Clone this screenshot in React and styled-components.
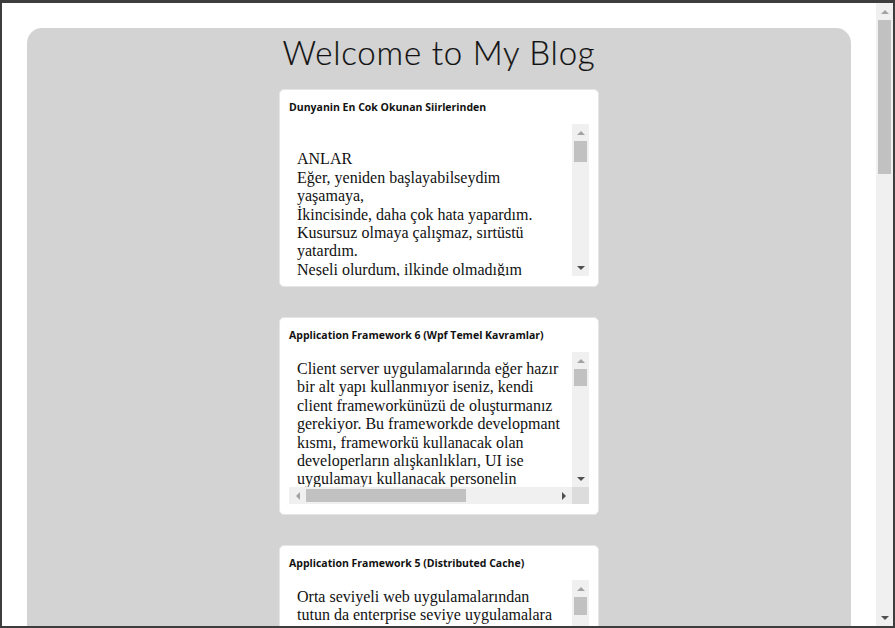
import React from 'react';
import styled, { createGlobalStyle, css } from 'styled-components';

const GlobalStyle = createGlobalStyle`
    html, body {
        margin: 0;
        height: 100%;
        overflow: hidden;
        background: #ffffff;
    }
`;

// browser window frame; the page and its scrollbar sit inside it
const WindowFrame = styled.div`
    height: 100vh;
    box-sizing: border-box;
    border: 2px solid #3d3d3d;
    border-top-width: 3px;
    display: flex;
    background: #ffffff;
`;

const Viewport = styled.div`
    flex: 1;
    min-width: 0;
    overflow: hidden;
`;

const Page = styled.div`
    padding: 25px;
`;

const BlogWrapper = styled.div`
    background: #d3d3d3;
    border-radius: 15px;
    padding: 4px 0 40px;
    display: flex;
    flex-direction: column;
    align-items: center;
`;

const BlogTitle = styled.h1`
    margin: 0 0 17px;
    font-family: Lato, "Open Sans", sans-serif;
    font-size: 33px;
    font-weight: 300;
    letter-spacing: 0.8px;
    line-height: 40px;
    color: #111111;
    -webkit-text-stroke: 0.2px #111111;
`;

const PostList = styled.div`
    display: flex;
    flex-direction: column;
    gap: 30px;
`;

const PostCard = styled.div`
    width: 320px;
    box-sizing: border-box;
    background: #ffffff;
    border: 1px solid #e6e6e6;
    border-radius: 5px;
    padding: 9px 9px 10px;
`;

const PostTitle = styled.h3`
    margin: 0 0 9px;
    font-family: "Open Sans", Lato, sans-serif;
    font-size: 10.5px;
    font-weight: 700;
    line-height: 16px;
    color: #111111;
`;

const PostBody = styled.div`
    height: 152px;
    display: grid;
    grid-template-columns: 1fr 17px;
    grid-template-rows: ${(p) => (p.$wide ? '1fr 17px' : '1fr')};
`;

const PostText = styled.div`
    min-width: 0;
    overflow: hidden;
    padding: 8px;
    font-family: "Liberation Serif", "Times New Roman", serif;
    font-size: 16px;
    line-height: 18.4px;
    color: #111111;
`;

const CodeLine = styled.pre`
    margin: 8px 0 0;
    font-family: "Liberation Mono", monospace;
    font-size: 13px;
    line-height: 16px;
`;

// fake classic scrollbar, drawn as elements
const Track = styled.div`
    background: #f0f0f0;
    display: flex;
    flex-direction: ${(p) => (p.$horizontal ? 'row' : 'column')};
    ${(p) => (p.$horizontal ? css`height: 17px;` : css`width: 17px;`)}
`;

const ArrowButton = styled.div`
    flex: 0 0 17px;
    width: 17px;
    height: 17px;
    display: flex;
    align-items: center;
    justify-content: center;
    &::after {
        content: '';
        width: 0;
        height: 0;
        ${(p) => {
            const c = p.$disabled ? '#a3a3a3' : '#505050';
            switch (p.$dir) {
                case 'up':
                    return css`border-left: 4px solid transparent; border-right: 4px solid transparent; border-bottom: 4px solid ${c};`;
                case 'down':
                    return css`border-left: 4px solid transparent; border-right: 4px solid transparent; border-top: 4px solid ${c};`;
                case 'left':
                    return css`border-top: 4px solid transparent; border-bottom: 4px solid transparent; border-right: 4px solid ${c};`;
                default:
                    return css`border-top: 4px solid transparent; border-bottom: 4px solid transparent; border-left: 4px solid ${c};`;
            }
        }}
    }
`;

const ThumbArea = styled.div`
    flex: 1;
    min-width: 0;
    min-height: 0;
    display: flex;
    flex-direction: ${(p) => (p.$horizontal ? 'row' : 'column')};
`;

const Thumb = styled.div`
    background: #c1c1c1;
    ${(p) => (p.$horizontal
        ? css`margin: 2px 0 2px ${p.$start}px; width: ${p.$size}px;`
        : css`margin: ${p.$start}px 2px 0; height: ${p.$size}px;`)}
`;

const Corner = styled.div`
    background: #dcdcdc;
`;

const ScrollBar = ({ horizontal, start = 0, size }) => (
    <Track $horizontal={horizontal}>
        <ArrowButton $dir={horizontal ? 'left' : 'up'} $disabled />
        <ThumbArea $horizontal={horizontal}>
            <Thumb $horizontal={horizontal} $start={start} $size={size} />
        </ThumbArea>
        <ArrowButton $dir={horizontal ? 'right' : 'down'} />
    </Track>
);

const posts = [
    {
        title: 'Dunyanin En Cok Okunan Siirlerinden',
        thumb: 21,
        lines: [
            '',
            'ANLAR',
            'Eğer, yeniden başlayabilseydim yaşamaya,',
            'İkincisinde, daha çok hata yapardım.',
            'Kusursuz olmaya çalışmaz, sırtüstü yatardım.',
            'Neşeli olurdum, ilkinde olmadığım kadar,',
            'Pek az şeyi ciddiye alırdım.',
            'Hijyenik olmazdım hiç.',
            'Daha çok riske girerdim.',
        ],
    },
    {
        title: 'Application Framework 6 (Wpf Temel Kavramlar)',
        thumb: 17,
        text: 'Client server uygulamalarında eğer hazır bir alt yapı kullanmıyor iseniz, kendi client frameworkünüzü de oluşturmanız gerekiyor. Bu frameworkde developmant kısmı, frameworkü kullanacak olan developerların alışkanlıkları, UI ise uygulamayı kullanacak personelin alışkanlıkları göz önüne alınarak tasarlanmalı.',
        code: '<Window x:Class="AppFramework.Shell" Title="Shell" Height="350">',
    },
    {
        title: 'Application Framework 5 (Distributed Cache)',
        thumb: 18,
        text: 'Orta seviyeli web uygulamalarından tutun da enterprise seviye uygulamalara kadar cache mekanizması performans için vazgeçilmez bir yapıdır. Uygulama birden fazla sunucu üzerinde çalıştığında ise cache verisinin sunucular arasında tutarlı olması gerekir.',
    },
    {
        title: 'Application Framework 4 (Logging)',
        thumb: 24,
        text: 'Her uygulamanın ihtiyaç duyduğu temel yapılardan biri de loglama altyapısıdır. Hataların, performans ölçümlerinin ve kullanıcı hareketlerinin kayıt altına alınması, uygulamanın bakımını oldukça kolaylaştırır.',
    },
    {
        title: 'Application Framework 3 (Exception Handling)',
        thumb: 22,
        text: 'Uygulamada oluşan hataların merkezi bir noktada yakalanması ve kullanıcıya anlamlı mesajlar gösterilmesi, frameworkün en önemli görevlerinden biridir.',
    },
    {
        title: 'Application Framework 2 (Service Layer)',
        thumb: 26,
        text: 'Client ve server arasındaki iletişimi sağlayan servis katmanı, uygulamanın genişleyebilmesi için doğru tasarlanmalıdır.',
    },
    {
        title: 'Application Framework 1 (Giriş)',
        thumb: 30,
        text: 'Bu yazı dizisinde sıfırdan bir uygulama çatısı oluşturmanın adımlarını inceleyeceğiz.',
    },
    {
        title: 'Entity Framework Code First',
        thumb: 28,
        text: 'Code first yaklaşımı ile veritabanı tablolarını sınıflar üzerinden tanımlayabilirsiniz.',
    },
    {
        title: 'Linq Sorgularında Performans',
        thumb: 32,
        text: 'Linq sorguları yazarken deferred execution kavramını bilmek önemlidir.',
    },
    {
        title: 'Asp.Net Mvc Routing',
        thumb: 34,
        text: 'Mvc uygulamalarında url yapısının düzenlenmesi routing tablosu ile yapılır.',
    },
];

const App = () => {
    return <>
        <GlobalStyle />
        <WindowFrame>
            <Viewport>
                <Page>
                    <BlogWrapper>
                        <BlogTitle>Welcome to My Blog</BlogTitle>
                        <PostList>
                            {posts.map((post) => (
                                <PostCard key={post.title}>
                                    <PostTitle>{post.title}</PostTitle>
                                    <PostBody $wide={!!post.code}>
                                        <PostText>
                                            {post.lines
                                                ? post.lines.map((line, i) => <div key={i}>{line || '\u00a0'}</div>)
                                                : post.text}
                                            {post.code && <CodeLine>{post.code}</CodeLine>}
                                        </PostText>
                                        <ScrollBar size={post.thumb} />
                                        {post.code && <>
                                            <ScrollBar horizontal size={160} />
                                            <Corner />
                                        </>}
                                    </PostBody>
                                </PostCard>
                            ))}
                        </PostList>
                    </BlogWrapper>
                </Page>
            </Viewport>
            <ScrollBar size={154} />
        </WindowFrame>
    </>;
};

export default App;
